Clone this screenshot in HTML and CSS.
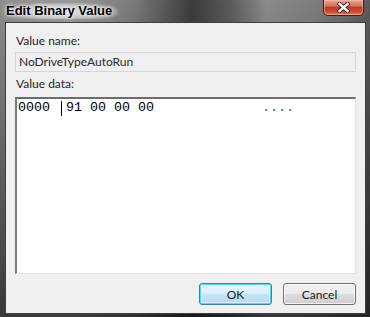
FILE: index.html
```html
<!DOCTYPE html>
<html>
<head>
<meta charset="utf-8">
<link rel="stylesheet" href="styles.css">
</head>
<body>
<div class="window">
  <div class="titlebar">
    <span class="title">Edit Binary Value</span>
    <div class="close">
      <svg width="13" height="11" viewBox="0 0 13 11">
        <path d="M2.5 2 L10.5 9 M10.5 2 L2.5 9" stroke="#3a1010" stroke-width="4.2" stroke-linecap="square"/>
        <path d="M2.5 2 L10.5 9 M10.5 2 L2.5 9" stroke="#ffffff" stroke-width="2.4" stroke-linecap="square"/>
      </svg>
    </div>
  </div>
  <div class="client">
    <div class="label first">Value name:</div>
    <div class="namefield">NoDriveTypeAutoRun</div>
    <div class="label second">Value data:</div>
    <div class="dataarea">
      <div class="hexline"><span class="addr">0000</span><span class="caret"></span><span class="bytes">91 00 00 00</span><span class="ascii">....</span></div>
    </div>
    <div class="buttons">
      <div class="btn default">OK</div>
      <div class="btn">Cancel</div>
    </div>
  </div>
</div>
</body>
</html>
```
FILE: styles.css
```css
html, body {
  margin: 0;
  padding: 0;
}
body {
  width: 370px;
  height: 317px;
  overflow: hidden;
  font-family: Lato, "Liberation Sans", Arial, sans-serif;
  font-size: 12px;
  color: #000;
}
.window {
  width: 370px;
  height: 317px;
  display: flex;
  flex-direction: column;
  background:
    linear-gradient(180deg, rgba(0,0,0,0) 0%, rgba(0,0,0,0.6) 100%),
    linear-gradient(90deg, #8c8c8c 0%, #9a9a9a 18%, #7a7a7a 36%, #3c3c3c 52%, #5a5a5a 62%, #8a8a8a 72%, #7c7c7c 86%, #5a5a5a 100%);
}
.titlebar {
  height: 22px;
  flex: none;
  position: relative;
  display: flex;
  align-items: flex-start;
}
.title {
  margin: 3px 0 0 6px;
  font-family: "Liberation Sans", Arial, sans-serif;
  font-weight: bold;
  font-size: 13px;
  line-height: 16px;
  color: #000;
  padding: 0 6px 0 0;
  background: radial-gradient(ellipse at 50% 55%, rgba(255,255,255,0.7) 0%, rgba(255,255,255,0.4) 55%, rgba(255,255,255,0) 80%);
  text-shadow: 0 0 6px #fff, 0 0 3px #fff;
}
.close {
  position: absolute;
  left: 323px;
  top: 0;
  width: 41px;
  height: 16px;
  box-sizing: border-box;
  border: 1px solid #4a1a14;
  border-top: none;
  border-radius: 0 0 5px 5px;
  background: linear-gradient(180deg, #e8a898 0%, #d8705c 40%, #c23a22 50%, #c84a2c 75%, #e07a50 100%);
  box-shadow: inset 0 0 0 1px rgba(255,200,180,0.5);
  display: flex;
  align-items: center;
  justify-content: center;
}
.client {
  flex: 1;
  margin: 0 4px 5px 5px;
  border: 1px solid #3e3e3e;
  background: #f0f0f0;
  padding: 10px 9px 8px 9px;
  display: flex;
  flex-direction: column;
}
.label {
  margin-left: 1px;
  line-height: 15px;
  height: 15px;
  color: #1e1e1e;
}
.label.second {
  margin-top: 4px;
}
.namefield {
  margin-top: 4px;
  height: 20px;
  box-sizing: border-box;
  border: 1px solid #d6d6d6;
  background: #f0f0f0;
  padding: 0 0 0 3px;
  line-height: 18px;
  color: #2a2a2a;
}
.dataarea {
  margin-top: 6px;
  height: 177px;
  box-sizing: border-box;
  background: #fff;
  border-top: 2px solid #6e6e6e;
  border-left: 2px solid #7a7a7a;
  border-right: 1px solid #e2e2e2;
  border-bottom: 1px solid #e2e2e2;
  padding: 1px 0 0 1px;
}
.hexline {
  font-family: "Liberation Mono", "Courier New", monospace;
  font-size: 13.333px;
  line-height: 16px;
  white-space: pre;
  display: flex;
  align-items: center;
  color: #000;
}
.addr {
  width: 43px;
}
.caret {
  width: 1px;
  height: 15px;
  background: #000;
  margin-right: 4px;
}
.bytes {
  width: 196px;
}
.ascii {
  color: #555;
}
.buttons {
  margin-top: 9px;
  display: flex;
  justify-content: flex-end;
  gap: 11px;
}
.btn {
  width: 73px;
  height: 22px;
  box-sizing: border-box;
  border: 1px solid #707070;
  border-radius: 3px;
  background: linear-gradient(180deg, #f2f2f2 0%, #ebebeb 48%, #dddddd 52%, #cfcfcf 100%);
  box-shadow: inset 0 0 0 1px rgba(255,255,255,0.7);
  display: flex;
  align-items: center;
  justify-content: center;
  color: #1a1a1a;
}
.btn.default {
  border-color: #3c7fb1;
  box-shadow: inset 0 0 0 1px #48d8fb, inset 0 0 0 2px rgba(255,255,255,0.5);
  background: linear-gradient(180deg, #eaf6fd 0%, #dbeef9 48%, #c4e4f6 52%, #b4d9f2 100%);
}
```
